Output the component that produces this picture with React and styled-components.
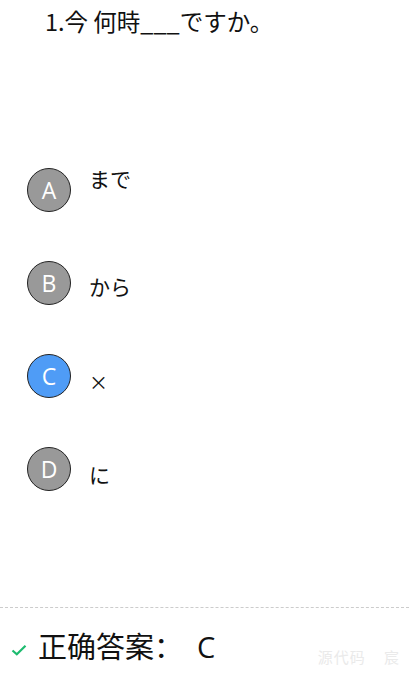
import styled, { createGlobalStyle } from "styled-components";

const GlobalStyle = createGlobalStyle`
  body {
    margin: 0;
    background: #fff;
    font-family: "Noto Sans CJK JP", "Noto Sans CJK SC", sans-serif;
    color: #111;
  }
`;

const Page = styled.div`
  width: 409px;
  height: 676px;
  display: flex;
  flex-direction: column;
  overflow: hidden;
`;

const Question = styled.div`
  padding: 3px 0 0 45px;
  font-size: 23.5px;
  line-height: 36px;
`;

const Options = styled.ul`
  list-style: none;
  margin: 129px 0 0;
  padding: 0 0 0 27px;
  display: flex;
  flex-direction: column;
  gap: 49px;
`;

const Option = styled.li`
  display: flex;
  align-items: center;
  height: 44px;
`;

const Letter = styled.span`
  width: 42px;
  height: 42px;
  flex: none;
  border-radius: 50%;
  border: 1px solid #222;
  background: ${(p) => (p.$active ? "#4f9cf6" : "#999")};
  color: #fff;
  font-family: "Open Sans", "Noto Sans", sans-serif;
  font-size: 23px;
  display: flex;
  align-items: center;
  justify-content: center;
`;

const OptionText = styled.span`
  margin-left: 18px;
  font-size: ${(p) => p.$size || 21}px;
  line-height: 30px;
  position: relative;
  top: ${(p) => p.$shift}px;
`;

const Footer = styled.div`
  margin-top: auto;
  border-top: 1px dashed #ccc;
  height: 69px;
  display: flex;
  align-items: center;
  padding: 6px 0 0 11px;
  box-sizing: border-box;
`;

const Check = styled.svg`
  margin-top: 10px;
`;

const Answer = styled.span`
  margin-left: 11px;
  font-family: "Noto Sans CJK SC", sans-serif;
  font-size: 29px;
  color: #111;
`;

const AnswerLetter = styled.span`
  margin-left: 14px;
  font-family: "Open Sans", "Noto Sans", sans-serif;
`;

const Watermark = styled.span`
  margin-left: auto;
  margin-right: 9px;
  margin-top: 22px;
  font-family: "Noto Sans CJK SC", sans-serif;
  font-size: 15px;
  color: #eaeaea;
  letter-spacing: 1px;
  word-spacing: 14px;
`;

const options = [
  { key: "A", text: "まで", shift: -12 },
  { key: "B", text: "から", shift: 3 },
  { key: "C", text: "×", shift: 6, size: 19, active: true },
  { key: "D", text: "に", shift: 5 },
];

export default function App() {
  return (
    <Page>
      <GlobalStyle />
      <Question>1.今 何時___ですか。</Question>
      <Options>
        {options.map((o) => (
          <Option key={o.key}>
            <Letter $active={o.active}>{o.key}</Letter>
            <OptionText $shift={o.shift} $size={o.size}>
              {o.text}
            </OptionText>
          </Option>
        ))}
      </Options>
      <Footer>
        <Check width="16" height="12" viewBox="0 0 16 12">
          <path d="M1.5 6.5 L5.8 10.3 L14.5 1.8" fill="none" stroke="#1dbb6f" strokeWidth="2.2" />
        </Check>
        <Answer>
          正确答案：<AnswerLetter>C</AnswerLetter>
        </Answer>
        <Watermark>源代码 宸</Watermark>
      </Footer>
    </Page>
  );
}
